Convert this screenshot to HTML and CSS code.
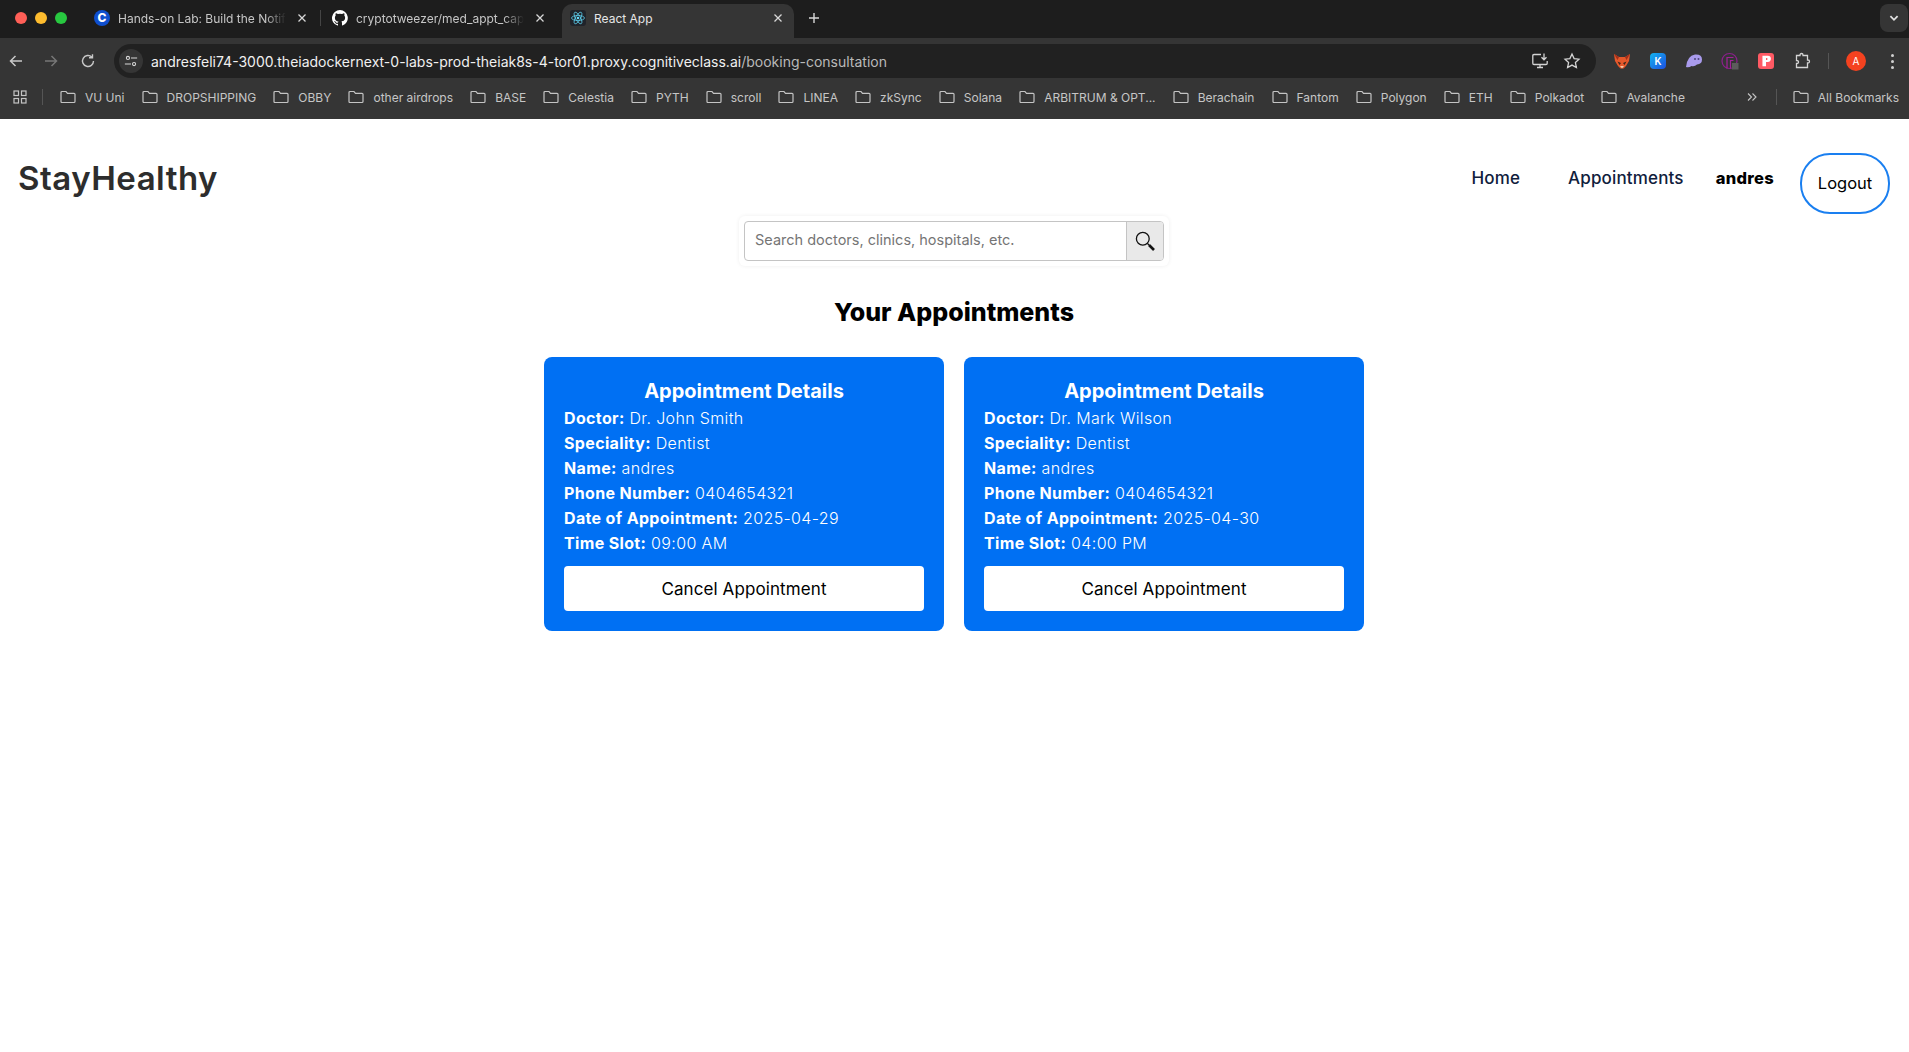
FILE: index.html
```html
<!DOCTYPE html>
<html lang="en">
<head>
    <meta charset="UTF-8">
    <meta name="viewport" content="width=device-width, initial-scale=1.0">
    <title>React App</title>
    <link rel="stylesheet" href="styles.css">
</head>
<body>
    <svg class="defs" width="0" height="0">
        <symbol id="folder" viewBox="0 0 16 14">
            <path d="M1 2.500Q1 1.500 2 1.500H6L7.500 3.300H14Q15 3.300 15 4.300V11.500Q15 12.500 14 12.500H2Q1 12.500 1 11.500Z" fill="none" stroke="#c4c4c4" stroke-width="1.200"/>
        </symbol>
        <symbol id="close" viewBox="0 0 10 10">
            <path d="M1.500 1.500L8.500 8.500M8.500 1.500L1.500 8.500" stroke="#d8d8d8" stroke-width="1.300" fill="none"/>
        </symbol>
    </svg>

    <div class="browser">
        <div class="tabstrip">
            <div class="lights">
                <span class="light red"></span>
                <span class="light yellow"></span>
                <span class="light green"></span>
            </div>
            <div class="tab">
                <span class="fav fav-c">C</span>
                <span class="tab-title">Hands-on Lab: Build the Notif</span>
                <svg class="tab-x"><use href="#close"/></svg>
            </div>
            <div class="tab-sep"></div>
            <div class="tab">
                <svg class="fav" viewBox="0 0 16 16"><path fill="#fff" d="M8 0a8 8 0 0 0-2.500 15.600c.4.100.5-.2.500-.4v-1.400c-2.200.5-2.700-1-2.700-1-.4-.9-.9-1.200-.9-1.200-.7-.5.100-.5.100-.5.800.100 1.200.8 1.200.8.700 1.200 1.900.9 2.300.7.100-.5.300-.9.500-1.100-1.800-.2-3.600-.9-3.600-4 0-.9.300-1.600.8-2.100-.1-.2-.4-1 .100-2.100 0 0 .7-.2 2.200.8a7.600 7.600 0 0 1 4 0c1.500-1 2.200-.8 2.200-.8.500 1.100.2 1.900.1 2.100.5.600.8 1.300.8 2.100 0 3.100-1.900 3.700-3.700 3.900.3.300.6.800.6 1.500v2.200c0 .2.100.5.600.4A8 8 0 0 0 8 0z"/></svg>
                <span class="tab-title">cryptotweezer/med_appt_cap</span>
                <svg class="tab-x"><use href="#close"/></svg>
            </div>
            <div class="tab tab-active">
                <svg class="fav" viewBox="0 0 16 16">
                    <rect width="16" height="16" rx="3" fill="#20232a"/>
                    <g fill="none" stroke="#61dafb" stroke-width=".7">
                        <ellipse cx="8" cy="8" rx="6.500" ry="2.500"/>
                        <ellipse cx="8" cy="8" rx="6.500" ry="2.500" transform="rotate(60 8 8)"/>
                        <ellipse cx="8" cy="8" rx="6.500" ry="2.500" transform="rotate(120 8 8)"/>
                    </g>
                    <circle cx="8" cy="8" r="1.300" fill="#61dafb"/>
                </svg>
                <span class="tab-title">React App</span>
                <svg class="tab-x"><use href="#close"/></svg>
            </div>
            <svg class="new-tab" viewBox="0 0 12 12"><path d="M6 1V11M1 6H11" stroke="#d8d8d8" stroke-width="1.400"/></svg>
            <div class="tab-menu">
                <svg viewBox="0 0 10 10"><path d="M2 3.500L5 6.500L8 3.500" stroke="#e0e0e0" stroke-width="1.500" fill="none"/></svg>
            </div>
        </div>

        <div class="toolbar">
            <svg class="tool-icon" viewBox="0 0 16 16"><path d="M14 8H3M7.500 3L2.500 8L7.500 13" stroke="#c8c8c8" stroke-width="1.500" fill="none"/></svg>
            <svg class="tool-icon" viewBox="0 0 16 16"><path d="M2 8H13M8.500 3L13.500 8L8.500 13" stroke="#777" stroke-width="1.500" fill="none"/></svg>
            <svg class="tool-icon reload" viewBox="0 0 16 16"><path d="M13.500 8A5.500 5.500 0 1 1 11.800 4M12.500 1.200V4.800H9" stroke="#c8c8c8" stroke-width="1.400" fill="none"/></svg>
            <div class="omnibox">
                <span class="site-info">
                    <svg viewBox="0 0 16 16"><g stroke="#d8d8d8" stroke-width="1.200" fill="none"><circle cx="4.500" cy="4.500" r="1.800"/><path d="M8 4.500H15M1 11.500H8"/><circle cx="11.500" cy="11.500" r="1.800"/></g></svg>
                </span>
                <span class="url"><span class="url-host">andresfeli74-3000.theiadockernext-0-labs-prod-theiak8s-4-tor01.proxy.cognitiveclass.ai</span>/booking-consultation</span>
                <svg class="omni-icon" viewBox="0 0 18 18"><path d="M10 2.500H3Q1.800 2.500 1.800 3.700V11.300Q1.800 12.500 3 12.500H15Q16.200 12.500 16.200 11.300V9M6 15.500H12M9 12.500V15.500M13 1.500V7.500M10.500 5.200L13 7.800L15.500 5.200" stroke="#d4d4d4" stroke-width="1.300" fill="none"/></svg>
                <svg class="omni-icon" viewBox="0 0 18 18"><path d="M9 2L11.100 6.600L16 7.200L12.400 10.600L13.400 15.600L9 13.100L4.600 15.600L5.600 10.600L2 7.200L6.900 6.600Z" stroke="#d4d4d4" stroke-width="1.300" fill="none"/></svg>
            </div>
            <div class="extensions">
                <svg class="ext" viewBox="0 0 18 18"><path d="M1 2L6 5H12L17 2L16 9L13 14L10.500 16.500H7.500L5 14L2 9Z" fill="#e5582b"/><path d="M1 2L6 5L4.500 8ZM17 2L12 5L13.500 8Z" fill="#a32e1a"/><path d="M4.500 9.500L8 11L6.500 13ZM13.500 9.500L10 11L11.500 13Z" fill="#3a261c"/><path d="M7 14H11L9 16.500Z" fill="#f3c8a8"/></svg>
                <span class="ext ext-k">K</span>
                <svg class="ext" viewBox="0 0 18 18"><path d="M1 15Q2 4 10 2.500Q17 2 17 7.500Q17 12 12 12.500Q9.500 15 6.500 14Q4 15.800 1 15Z" fill="#a99bec"/><circle cx="10" cy="7" r="1" fill="#4e4678"/><circle cx="13.500" cy="7" r="1" fill="#4e4678"/></svg>
                <svg class="ext" viewBox="0 0 18 18"><circle cx="8.500" cy="9" r="7.500" fill="none" stroke="#8c1f8c" stroke-width="1.200"/><path d="M6 16.500V5.500H12.500M9.500 16.500V8.500H12.500" fill="none" stroke="#a3209a" stroke-width="1.200"/><rect x="11" y="11" width="6.500" height="6.500" fill="#5c5c5c"/></svg>
                <span class="ext ext-p"><svg viewBox="0 0 18 18"><path d="M5 3H11Q14.500 3 14.500 6.500Q14.500 10 11 10H9V15H5Z" fill="#fff"/><path d="M9 5.500H10.500V8H9Z" fill="#ff5a64"/></svg></span>
                <svg class="ext" viewBox="0 0 18 18"><path d="M7 3.500V3Q7 1.500 8.500 1.500T10 3V3.500H14.500V8H15Q16.500 8 16.500 9.500T15 11H14.500V15.500H3.500V11.500H4Q5.500 11.500 5.500 10T4 8.500H3.500V3.500Z" fill="none" stroke="#d4d4d4" stroke-width="1.300"/></svg>
                <span class="tool-sep"></span>
                <span class="avatar">A</span>
                <span class="dots"><i></i><i></i><i></i></span>
            </div>
        </div>

        <div class="bookmarks">
            <svg class="apps" viewBox="0 0 14 14"><g fill="none" stroke="#c4c4c4" stroke-width="1.200"><rect x="1" y="1" width="4.500" height="4.500"/><rect x="8.500" y="1" width="4.500" height="4.500"/><rect x="1" y="8.500" width="4.500" height="4.500"/><rect x="8.500" y="8.500" width="4.500" height="4.500"/></g></svg>
            <span class="mark-sep"></span>
            <div class="mark-list">
                <span class="mark"><svg><use href="#folder"/></svg>VU Uni</span>
                <span class="mark"><svg><use href="#folder"/></svg>DROPSHIPPING</span>
                <span class="mark"><svg><use href="#folder"/></svg>OBBY</span>
                <span class="mark"><svg><use href="#folder"/></svg>other airdrops</span>
                <span class="mark"><svg><use href="#folder"/></svg>BASE</span>
                <span class="mark"><svg><use href="#folder"/></svg>Celestia</span>
                <span class="mark"><svg><use href="#folder"/></svg>PYTH</span>
                <span class="mark"><svg><use href="#folder"/></svg>scroll</span>
                <span class="mark"><svg><use href="#folder"/></svg>LINEA</span>
                <span class="mark"><svg><use href="#folder"/></svg>zkSync</span>
                <span class="mark"><svg><use href="#folder"/></svg>Solana</span>
                <span class="mark"><svg><use href="#folder"/></svg>ARBITRUM &amp; OPT...</span>
                <span class="mark"><svg><use href="#folder"/></svg>Berachain</span>
                <span class="mark"><svg><use href="#folder"/></svg>Fantom</span>
                <span class="mark"><svg><use href="#folder"/></svg>Polygon</span>
                <span class="mark"><svg><use href="#folder"/></svg>ETH</span>
                <span class="mark"><svg><use href="#folder"/></svg>Polkadot</span>
                <span class="mark"><svg><use href="#folder"/></svg>Avalanche</span>
            </div>
            <svg class="more" viewBox="0 0 12 12"><path d="M2 2.500L5.500 6L2 9.500M6.500 2.500L10 6L6.500 9.500" stroke="#c4c4c4" stroke-width="1.100" fill="none"/></svg>
            <span class="mark-sep"></span>
            <span class="mark mark-all"><svg><use href="#folder"/></svg>All Bookmarks</span>
        </div>
    </div>

    <div class="page">
        <nav class="navbar">
            <div class="logo">StayHealthy</div>
            <div class="nav-links">
                <a class="nav-link nav-home">Home</a>
                <a class="nav-link nav-appts">Appointments</a>
                <span class="nav-user">andres</span>
                <button class="logout">Logout</button>
            </div>
        </nav>

        <div class="search-wrap">
            <div class="search">
                <span class="search-input">Search doctors, clinics, hospitals, etc.</span>
                <span class="search-btn">
                    <svg viewBox="0 0 20 20"><circle cx="7.800" cy="7.800" r="6.400" fill="none" stroke="#111" stroke-width="1.300"/><path d="M12.500 12.500L14 14" stroke="#111" stroke-width="1.300"/><path d="M14 14L19 19" stroke="#111" stroke-width="2.600"/></svg>
                </span>
            </div>
        </div>

        <h2 class="page-title">Your Appointments</h2>

        <div class="cards">
            <div class="card">
                <h3>Appointment Details</h3>
                <p><strong>Doctor:</strong> Dr. John Smith</p>
                <p><strong>Speciality:</strong> Dentist</p>
                <p><strong>Name:</strong> andres</p>
                <p><strong>Phone Number:</strong> 0404654321</p>
                <p><strong>Date of Appointment:</strong> 2025-04-29</p>
                <p><strong>Time Slot:</strong> 09:00 AM</p>
                <button class="cancel">Cancel Appointment</button>
            </div>
            <div class="card">
                <h3>Appointment Details</h3>
                <p><strong>Doctor:</strong> Dr. Mark Wilson</p>
                <p><strong>Speciality:</strong> Dentist</p>
                <p><strong>Name:</strong> andres</p>
                <p><strong>Phone Number:</strong> 0404654321</p>
                <p><strong>Date of Appointment:</strong> 2025-04-30</p>
                <p><strong>Time Slot:</strong> 04:00 PM</p>
                <button class="cancel">Cancel Appointment</button>
            </div>
        </div>
    </div>
</body>
</html>
```

FILE: styles.css
```css
* {
    box-sizing: border-box;
}
body {
    margin: 0;
    height: 1052px;
    overflow: hidden;
    background: #fff;
    font-family: Inter, "Noto Sans", sans-serif;
}
.defs {
    position: absolute;
}

/* browser chrome */
.browser {
    height: 119px;
    color: #d6d6d6;
}
.tabstrip {
    height: 38px;
    background: #1d1d1d;
    display: flex;
    align-items: flex-end;
    padding-left: 15px;
}
.lights {
    display: flex;
    gap: 8px;
    width: 69px;
    align-self: flex-start;
    margin-top: 12px;
}
.light {
    width: 12px;
    height: 12px;
    border-radius: 50%;
}
.red { background: #ff5f57; }
.yellow { background: #febc2e; }
.green { background: #28c840; }
.tab {
    width: 232px;
    height: 34px;
    display: flex;
    align-items: center;
    padding: 0 9px 6px 10px;
    font-size: 12px;
    color: #c6c6c6;
}
.tab-sep {
    width: 1px;
    height: 16px;
    background: #454545;
    margin: 0 1px 12px 4px;
    flex: none;
}
.tab-active {
    background: #353535;
    border-radius: 10px 10px 0 0;
    color: #e6e6e6;
    margin-left: 8px;
    padding: 0 11px 6px 8px;
}
.fav {
    width: 16px;
    height: 16px;
    flex: none;
    margin-right: 8px;
}
.fav-c {
    border-radius: 50%;
    background: #0f4fcf;
    color: #fff;
    font-size: 12px;
    font-weight: 800;
    text-align: center;
    line-height: 16px;
}
.tab-title {
    white-space: nowrap;
    -webkit-mask-image: linear-gradient(to right, #000 88%, transparent);
    mask-image: linear-gradient(to right, #000 88%, transparent);
}
.tab-active .tab-title {
    -webkit-mask-image: none;
    mask-image: none;
}
.tab-x {
    width: 10px;
    height: 10px;
    flex: none;
    margin-left: auto;
}
.new-tab {
    width: 12px;
    height: 12px;
    margin: 0 0 14px 14px;
}
.tab-menu {
    margin-left: auto;
    margin-right: 1px;
    align-self: flex-start;
    margin-top: 4px;
    width: 28px;
    height: 28px;
    border-radius: 8px;
    background: #353535;
    display: flex;
    align-items: center;
    justify-content: center;
}
.tab-menu svg {
    width: 12px;
    height: 12px;
}

.toolbar {
    height: 46px;
    background: #353535;
    display: flex;
    align-items: center;
    padding-left: 8px;
    gap: 19px;
}
.tool-icon {
    width: 16px;
    height: 16px;
    flex: none;
}
.reload {
    margin-left: 2px;
}
.omnibox {
    width: 1482px;
    height: 34px;
    margin-left: -1px;
    border-radius: 17px;
    background: #212121;
    display: flex;
    align-items: center;
    padding: 0 15px 0 5px;
    flex: none;
}
.site-info {
    width: 24px;
    height: 24px;
    border-radius: 50%;
    background: #353535;
    display: flex;
    align-items: center;
    justify-content: center;
    flex: none;
}
.site-info svg {
    width: 14px;
    height: 14px;
}
.url {
    flex: 1;
    margin-left: 8px;
    font-size: 14px;
    color: #b9b9b9;
    white-space: nowrap;
}
.url-host {
    color: #f0f0f0;
}
.omni-icon {
    width: 18px;
    height: 18px;
    margin-left: 14px;
    flex: none;
}
.extensions {
    display: flex;
    align-items: center;
    gap: 18px;
    margin-left: -2px;
}
.ext {
    width: 18px;
    height: 18px;
    flex: none;
    display: block;
}
.ext-k {
    width: 16px;
    height: 16px;
    margin: 0 1px;
    border-radius: 4px;
    background: linear-gradient(135deg, #12b4f0, #1d4ee0);
    color: #fff;
    font-size: 10px;
    font-weight: 600;
    line-height: 16px;
    text-align: center;
}
.ext-p {
    width: 16px;
    height: 16px;
    margin: 0 1px;
    border-radius: 3px;
    background: #ff5a64;
}
.tool-sep {
    width: 1px;
    height: 16px;
    background: #555;
    margin: 0 -1px;
}
.avatar {
    width: 20px;
    height: 20px;
    border-radius: 50%;
    background: #f4421f;
    color: #fff;
    font-size: 10px;
    line-height: 20px;
    text-align: center;
}
.dots {
    display: flex;
    flex-direction: column;
    gap: 3px;
    margin-left: 7px;
}
.dots i {
    width: 3px;
    height: 3px;
    border-radius: 50%;
    background: #d0d0d0;
}

.bookmarks {
    height: 35px;
    background: #353535;
    display: flex;
    align-items: center;
    padding: 0 10px 9px 13px;
    font-size: 12px;
    color: #c6c6c6;
}
.apps {
    width: 14px;
    height: 14px;
    flex: none;
}
.mark-sep {
    width: 1px;
    height: 16px;
    background: #555;
    margin-left: 15px;
    flex: none;
}
.mark-list {
    display: flex;
    gap: 17.100px;
    margin-left: 17px;
    flex: 1;
}
.mark {
    display: flex;
    align-items: center;
    white-space: nowrap;
}
.mark svg {
    width: 16px;
    height: 14px;
    margin-right: 9px;
    flex: none;
}
.more {
    width: 12px;
    height: 12px;
    flex: none;
}
.bookmarks .more + .mark-sep {
    margin-left: 18px;
}
.mark-all {
    margin-left: 16px;
}

/* page */
.navbar {
    height: 97px;
    display: flex;
    justify-content: space-between;
    align-items: flex-start;
    padding: 34px 19px 0 18px;
}
.logo {
    font-size: 33px;
    font-weight: 600;
    letter-spacing: .5px;
    color: #2d2d2d;
    line-height: 50px;
}
.nav-links {
    display: flex;
    align-items: flex-start;
}
.nav-link {
    font-size: 17px;
    font-weight: 500;
    letter-spacing: .15px;
    color: #10203c;
    line-height: 50px;
    height: 50px;
}
.nav-home {
    margin-right: 48px;
}
.nav-appts {
    margin-right: 32px;
}
.nav-user {
    font-size: 16.500px;
    letter-spacing: .3px;
    font-weight: 800;
    color: #000;
    line-height: 50px;
    margin-right: 26px;
}
.logout {
    width: 90px;
    height: 61px;
    border: 2px solid #1a7ff0;
    border-radius: 30px;
    background: #fff;
    font: inherit;
    font-size: 16.500px;
    color: #000;
    padding: 0 0 2px;
}
.search-wrap {
    width: 430px;
    height: 50px;
    margin: 0 0 0 739px;
    padding: 5px;
    border-radius: 6px;
    box-shadow: 0 0 4px rgba(0, 0, 0, .07);
}
.search {
    height: 40px;
    display: flex;
    border: 1px solid #c4c4c4;
    border-radius: 4px;
    overflow: hidden;
}
.search-input {
    flex: 1;
    padding-left: 10px;
    font-size: 14.500px;
    line-height: 36px;
    color: #757575;
}
.search-btn {
    width: 37px;
    background: #e9e9e9;
    border-left: 1px solid #c4c4c4;
    display: flex;
    align-items: center;
    justify-content: center;
}
.search-btn svg {
    width: 20px;
    height: 20px;
}
.page-title {
    margin: 0;
    padding: 28px 1px 0 0;
    height: 91px;
    text-align: center;
    font-size: 25px;
    font-weight: 800;
    color: #000;
    line-height: 36px;
}
.cards {
    display: flex;
    justify-content: center;
    gap: 20px;
    padding-right: 1px;
}
.card {
    width: 400px;
    height: 274px;
    padding: 20px;
    border-radius: 8px;
    background: #0070f3;
    color: #fff;
}
.card h3 {
    margin: 0;
    text-align: center;
    font-size: 20px;
    font-weight: 700;
    line-height: 29px;
}
.card p {
    margin: 0;
    font-size: 16px;
    font-weight: 300;
    letter-spacing: .35px;
    line-height: 25px;
}
.card strong {
    font-weight: 700;
}
.cancel {
    display: block;
    width: 100%;
    height: 45px;
    margin-top: 10px;
    border: 0;
    border-radius: 4px;
    background: #fff;
    font: inherit;
    font-size: 17px;
    letter-spacing: .1px;
    color: #000;
}
```
